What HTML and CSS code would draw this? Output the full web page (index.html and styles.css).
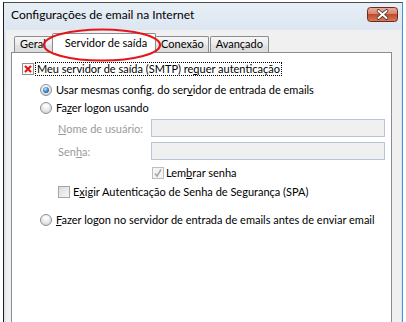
FILE: index.html
```html
<!DOCTYPE html>
<html lang="pt">
<head>
<meta charset="utf-8">
<title>Configurações de email na Internet</title>
<link rel="stylesheet" href="styles.css">
</head>
<body>
<div class="window">
  <div class="titlebar">
    <span class="title">Configurações de email na Internet</span>
    <span class="close">
      <svg width="31" height="15" viewBox="0 0 31 15">
        <defs>
          <linearGradient id="cg" x1="0" y1="0" x2="0" y2="1">
            <stop offset="0" stop-color="#eab0a0"/>
            <stop offset="0.45" stop-color="#d8846c"/>
            <stop offset="0.5" stop-color="#c24a2c"/>
            <stop offset="1" stop-color="#d77d5e"/>
          </linearGradient>
        </defs>
        <rect x="0.5" y="0.5" width="30" height="14" rx="3" fill="url(#cg)" stroke="#6e2b1c"/>
        <path d="M11.5 4 L19.5 11 M19.5 4 L11.5 11" stroke="#43312d" stroke-width="3.6" stroke-linecap="round"/>
        <path d="M11.5 4 L19.5 11 M19.5 4 L11.5 11" stroke="#fff" stroke-width="2" stroke-linecap="round"/>
      </svg>
    </span>
  </div>
  <div class="client">
    <div class="tabs">
      <div class="tab t-geral">Geral</div>
      <div class="tab sel">Servidor de saída</div>
      <div class="tab t-con">Conexão</div>
      <div class="tab t-av">Avançado</div>
    </div>
    <div class="panel">
      <div class="row r1">
        <span class="cb">
          <svg width="12" height="12" viewBox="0 0 12 12">
            <rect x="0.5" y="0.5" width="11" height="11" fill="#f6f6f6" stroke="#8e8f8f"/>
            <path d="M3 3 L9 9 M9 3 L3 9" stroke="#e3120f" stroke-width="2"/>
          </svg>
        </span>
        <span class="focus">Meu servidor de saída (SMTP) re<u>q</u>uer autenticação</span>
      </div>
      <div class="row r2 ind1">
        <span class="rb on"></span>
        <span class="lbl">Usar mesmas config. do ser<u>v</u>idor de entrada de emails</span>
      </div>
      <div class="row r3 ind1">
        <span class="rb"></span>
        <span class="lbl">Fa<u>z</u>er logon usando</span>
      </div>
      <div class="field f1">
        <span class="flabel"><u>N</u>ome de usuário:</span>
        <span class="input"></span>
      </div>
      <div class="field f2">
        <span class="flabel">Sen<u>h</u>a:</span>
        <span class="input"></span>
      </div>
      <div class="row r6 ind3">
        <span class="cb">
          <svg width="12" height="12" viewBox="0 0 12 12">
            <rect x="0.5" y="0.5" width="11" height="11" fill="#f4f4f4" stroke="#bdbdbd"/>
            <path d="M3 6.5 L5 9 L9 2.5" fill="none" stroke="#a9a9a9" stroke-width="1.6"/>
          </svg>
        </span>
        <span class="lbl2">Lem<u>b</u>rar senha</span>
      </div>
      <div class="row r7 ind2">
        <span class="cb empty"></span>
        <span class="lbl3">E<u>x</u>igir Autenticação de Senha de Segurança (SPA)</span>
      </div>
      <div class="row r8 ind1">
        <span class="rb"></span>
        <span class="lbl"><u>F</u>azer logon no servidor de entrada de emails antes de enviar email</span>
      </div>
    </div>
  </div>
  <svg class="mark" width="400" height="80" viewBox="0 0 400 80">
    <ellipse cx="98" cy="42" rx="58" ry="15.5" fill="none" stroke="#e5161b" stroke-width="2.2"/>
  </svg>
</div>
</body>
</html>
```
FILE: styles.css
```css
html, body {
  margin: 0;
  padding: 0;
  background: #fff;
  overflow: hidden;
  width: 406px;
  height: 322px;
}
body {
  font-family: Lato, "Liberation Sans", sans-serif;
  font-size: 11px;
  color: #000;
}
.window {
  position: relative;
  margin: 2px 0 0 3px;
  width: 400px;
  height: 320px;
  box-sizing: border-box;
  border-top: 1px solid #4a4f56;
  border-left: 1px solid #1c1c1c;
  border-right: 1px solid #3d93dc;
  background: linear-gradient(#e7eef6, #d8e3ef 40px, #dbe6f1);
  display: flex;
  flex-direction: column;
}
.titlebar {
  height: 27px;
  flex: 0 0 27px;
  display: flex;
  align-items: flex-start;
  padding: 4px 4px 0 7px;
  box-sizing: border-box;
}
.title {
  font-size: 12px;
  line-height: 15px;
  color: #000;
}
.close {
  margin-left: auto;
  width: 31px;
  height: 15px;
  display: block;
}
.close svg { display: block; }
.client {
  flex: 1;
  min-height: 0;
  margin: 0 1px 0 2px;
  background: #f0f0f0;
  padding-left: 5px;
  display: flex;
  flex-direction: column;
}
.tabs {
  height: 22px;
  flex: 0 0 22px;
  display: flex;
  align-items: flex-end;
  margin-left: 3px;
  position: relative;
  z-index: 1;
}
.tab {
  height: 16px;
  box-sizing: border-box;
  border: 1px solid #898c95;
  border-bottom: none;
  border-radius: 2px 2px 0 0;
  background: linear-gradient(#f6f6f6, #ebebeb 50%, #e2e2e2 51%, #dcdcdc);
  padding: 0 5px;
  line-height: 14px;
  white-space: nowrap;
}
.t-geral { padding-right: 7px; }
.sel {
  height: 20px;
  background: #fff;
  margin: 0 -1px -1px -2px;
  padding: 0 8px 0 12px;
  line-height: 17px;
  position: relative;
  z-index: 2;
}
.t-con { padding: 0 4px 0 5px; }
.t-av { margin-left: 1px; }
.panel {
  width: 381px;
  flex: 1;
  min-height: 0;
  box-sizing: border-box;
  border: 1px solid #898c95;
  border-bottom: none;
  background: #fff;
  padding-top: 9px;
  display: flex;
  flex-direction: column;
}
.row {
  display: flex;
  align-items: center;
  height: 13px;
  white-space: nowrap;
}
.r1 {
  height: 14px;
  margin-left: 10px;
}
.cb {
  width: 12px;
  height: 12px;
  flex: 0 0 12px;
  display: block;
}
.cb svg { display: block; }
.cb.empty {
  box-sizing: border-box;
  border: 1px solid #a3a3a3;
  background: linear-gradient(135deg, #dcdcdc, #f6f6f6);
}
.focus {
  margin-left: 1px;
  border: 1px dotted #000;
  height: 14px;
  box-sizing: border-box;
  line-height: 12px;
  padding: 0 1px 0 1px;
}
.ind1 { margin-left: 28px; }
.ind2 { margin-left: 46px; }
.ind3 { margin-left: 140px; }
.r2 { margin-top: 7px; }
.r3 { margin-top: 5px; }
.rb {
  width: 12px;
  height: 12px;
  flex: 0 0 12px;
  box-sizing: border-box;
  border-radius: 50%;
  border: 1px solid #8e9091;
  background: radial-gradient(circle at 50% 30%, #ffffff 0%, #ececec 45%, #c9c9c9 100%);
  display: flex;
  align-items: center;
  justify-content: center;
}
.rb.on::after {
  content: "";
  width: 6px;
  height: 6px;
  border-radius: 50%;
  background: radial-gradient(circle at 40% 35%, #c3ecff 0%, #3a8ad6 45%, #0c3f86 100%);
}
.lbl { margin-left: 4px; }
.field {
  display: flex;
  align-items: center;
  margin-left: 46px;
  margin-top: 5px;
  height: 18px;
}
.flabel {
  flex: 0 0 93px;
  color: #9b9b9b;
}
.input {
  width: 234px;
  height: 18px;
  box-sizing: border-box;
  border: 1px solid #b7c5d5;
  background: #f0f0f0;
}
.r6 { margin-top: 6px; }
.lbl2 { margin-left: 2px; }
.r7 { margin-top: 6px; }
.lbl3 { margin-left: 3px; }
.r8 { margin-top: 15px; }
u { text-decoration: underline; text-underline-offset: 1px; }
.mark {
  position: absolute;
  left: 0;
  top: 0;
  pointer-events: none;
  z-index: 5;
}
```
